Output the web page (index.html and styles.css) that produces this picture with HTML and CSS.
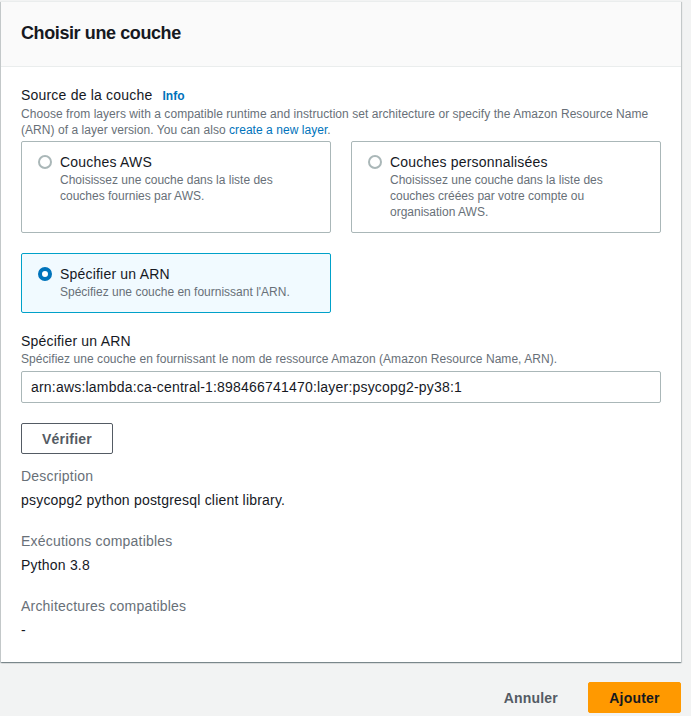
FILE: index.html
```html
<!DOCTYPE html>
<html lang="fr">
<head>
<meta charset="utf-8">
<title>Choisir une couche</title>
<link rel="stylesheet" href="styles.css">
</head>
<body>
<div class="page">
  <section class="card">
    <header class="card-header">
      <h2 class="card-title">Choisir une couche</h2>
    </header>
    <div class="card-body">
      <div class="field">
        <div class="field-label">Source de la couche <a class="info" href="#">Info</a></div>
        <div class="field-desc">Choose from layers with a compatible runtime and instruction set architecture or specify the Amazon Resource Name (ARN) of a layer version. You can also <a class="link" href="#">create a new layer</a>.</div>
        <div class="tiles">
          <label class="tile">
            <span class="radio"></span>
            <span class="tile-text">
              <span class="tile-label">Couches AWS</span>
              <span class="tile-desc">Choisissez une couche dans la liste des couches fournies par AWS.</span>
            </span>
          </label>
          <label class="tile">
            <span class="radio"></span>
            <span class="tile-text">
              <span class="tile-label">Couches personnalisées</span>
              <span class="tile-desc">Choisissez une couche dans la liste des couches créées par votre compte ou organisation AWS.</span>
            </span>
          </label>
          <label class="tile tile-checked">
            <span class="radio radio-checked"></span>
            <span class="tile-text">
              <span class="tile-label">Spécifier un ARN</span>
              <span class="tile-desc">Spécifiez une couche en fournissant l'ARN.</span>
            </span>
          </label>
        </div>
      </div>

      <div class="field field-arn">
        <div class="field-label">Spécifier un ARN</div>
        <div class="field-desc">Spécifiez une couche en fournissant le nom de ressource Amazon (Amazon Resource Name, ARN).</div>
        <div class="input">arn:aws:lambda:ca-central-1:898466741470:layer:psycopg2-py38:1</div>
      </div>

      <div class="btn-row">
        <button class="btn btn-normal">Vérifier</button>
      </div>

      <dl class="details">
        <div class="kv">
          <dt>Description</dt>
          <dd>psycopg2 python postgresql client library.</dd>
        </div>
        <div class="kv">
          <dt>Exécutions compatibles</dt>
          <dd>Python 3.8</dd>
        </div>
        <div class="kv">
          <dt>Architectures compatibles</dt>
          <dd>-</dd>
        </div>
      </dl>
    </div>
  </section>

  <div class="actions">
    <button class="btn btn-link">Annuler</button>
    <button class="btn btn-primary">Ajouter</button>
  </div>
</div>
</body>
</html>
```

FILE: styles.css
```css
* { box-sizing: border-box; }

html, body {
  margin: 0;
  padding: 0;
  background: #f2f3f3;
}

body {
  font-family: "Liberation Sans", Arial, sans-serif;
  font-size: 14px;
  line-height: 20px;
  letter-spacing: 0.2px;
  color: #16191f;
}

.page {
  width: 681px;
  padding-top: 1px;
}

.card {
  background: #ffffff;
  border-top: 1px solid #eaeded;
  box-shadow: 0 1px 1px 0 rgba(0, 28, 36, 0.3), 1px 1px 1px 0 rgba(0, 28, 36, 0.15), -1px 1px 1px 0 rgba(0, 28, 36, 0.15);
  margin-left: 1px;
}

.card-header {
  background: #fafafa;
  border-bottom: 1px solid #eaeded;
  padding: 20px 20px 22px 20px;
}

.card-title {
  margin: 0;
  font-size: 18px;
  line-height: 22px;
  font-weight: 700;
  letter-spacing: -0.4px;
  color: #16191f;
}

.card-body {
  padding: 18px 20px 22px 20px;
}

.field-label {
  font-size: 14px;
  line-height: 20px;
  color: #16191f;
}

.info {
  font-size: 12px;
  font-weight: 700;
  letter-spacing: 0;
  color: #0073bb;
  text-decoration: none;
  margin-left: 6px;
}

.field-desc {
  font-size: 12px;
  line-height: 16px;
  letter-spacing: 0.05px;
  color: #687078;
}

.link {
  color: #0073bb;
  text-decoration: none;
}

.tiles {
  margin-top: 3px;
  display: grid;
  grid-template-columns: 310px 310px;
  column-gap: 20px;
  row-gap: 20px;
}

.tile {
  display: flex;
  align-items: flex-start;
  gap: 8px;
  border: 1px solid #aab7b8;
  border-radius: 2px;
  padding: 10px 22px 12px 16px;
  background: #ffffff;
}

.tile-checked {
  border-color: #00a1c9;
  background: #f1faff;
}

.radio {
  flex: none;
  width: 14px;
  height: 14px;
  margin-top: 3px;
  border-radius: 50%;
  border: 2px solid #aab7b8;
  background: #ffffff;
}

.radio-checked {
  border: 4px solid #0073bb;
}

.tile-text {
  display: flex;
  flex-direction: column;
}

.tile-label {
  font-size: 14px;
  line-height: 20px;
  color: #16191f;
}

.tile-desc {
  font-size: 12px;
  line-height: 16px;
  letter-spacing: 0;
  color: #687078;
}

.field-arn {
  margin-top: 18px;
}

.input {
  margin-top: 4px;
  height: 32px;
  border: 1px solid #aab7b8;
  border-radius: 2px;
  padding: 5px 9px;
  font-size: 14px;
  line-height: 20px;
  color: #16191f;
  background: #ffffff;
}

.btn-row {
  margin-top: 20px;
}

.btn {
  font-family: "Liberation Sans", Arial, sans-serif;
  font-size: 14px;
  line-height: 20px;
  font-weight: 700;
  letter-spacing: 0.2px;
  border-radius: 2px;
  padding: 5px 20px;
  cursor: pointer;
}

.btn-normal {
  width: 92px;
  height: 31px;
  background: #ffffff;
  border: 1px solid #545b64;
  color: #545b64;
  padding: 0;
}

.details {
  margin: 12px 0 0 0;
  display: flex;
  flex-direction: column;
  gap: 21px;
}

.kv dt {
  font-size: 14px;
  line-height: 20px;
  color: #687078;
}

.kv dd {
  margin: 4px 0 0 0;
  font-size: 14px;
  line-height: 20px;
  color: #16191f;
}

.actions {
  display: flex;
  justify-content: flex-end;
  align-items: center;
  gap: 9px;
  margin-top: 20px;
  margin-left: 1px;
}

.btn-link {
  background: transparent;
  border: 1px solid transparent;
  color: #545b64;
  height: 31px;
  padding: 0 20px;
}

.btn-primary {
  background: #ff9900;
  border: 1px solid #ff9900;
  color: #16191f;
  width: 93px;
  height: 31px;
  padding: 0;
}
```
